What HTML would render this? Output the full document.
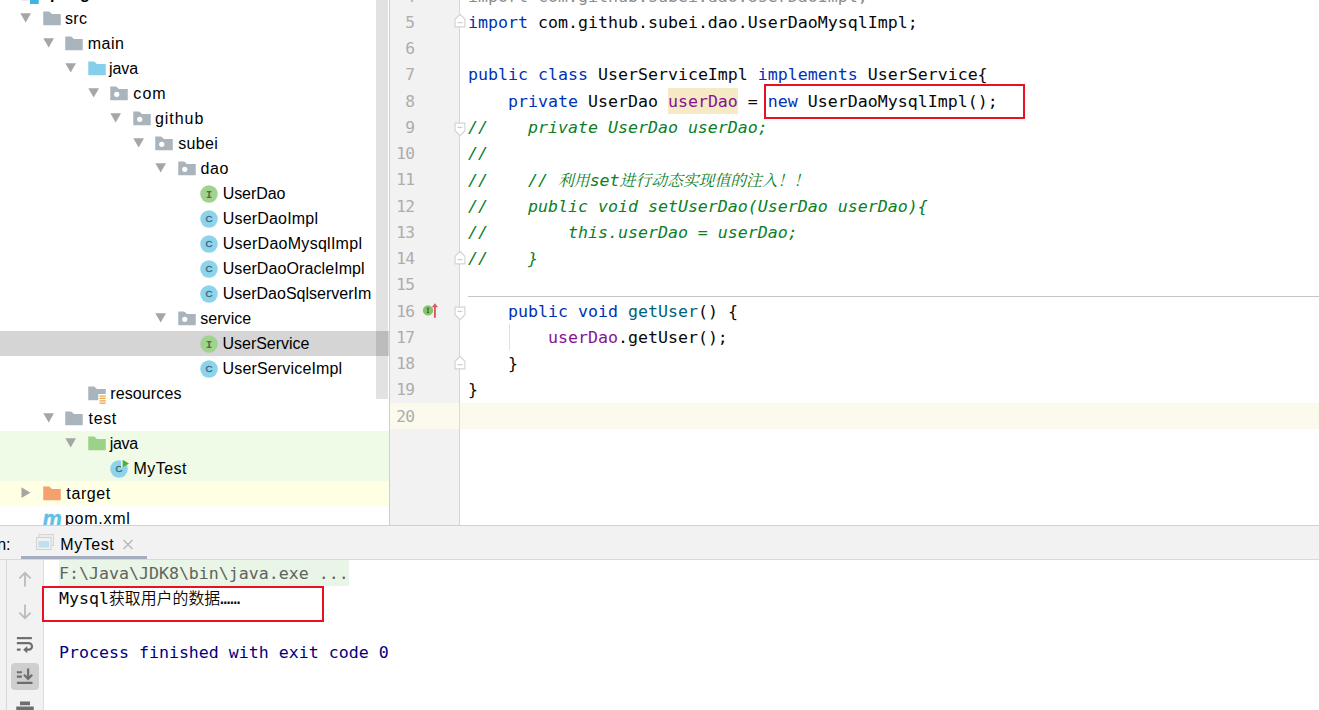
<!DOCTYPE html>
<html lang="zh-CN"><head><meta charset="utf-8"><title>IDE</title>
<style>
html,body{margin:0;padding:0}
body{width:1319px;height:710px;overflow:hidden;background:#fff;position:relative;font-family:"Liberation Sans","Noto Sans CJK SC",sans-serif;color:#000}
#tree{position:absolute;left:0;top:0;width:389px;height:525px;overflow:hidden;background:#fff}
.row{position:absolute;left:0;width:389px;height:25px;line-height:25px;font-size:16px;white-space:nowrap}
.row .t{position:absolute;top:0;letter-spacing:0}
.ic{position:absolute;width:20px;height:20px;top:2.6px}
.ci{top:3.1px}
.ar{position:absolute;width:11.4px;height:11.4px;top:6.2px}
#sb{position:absolute;left:376px;top:0;width:11px;height:398.5px;background:rgba(0,0,0,.115);border-right:1px solid rgba(255,255,255,.0)}
#vline{position:absolute;left:389px;top:0;width:1px;height:525px;background:#cfcfcf}
#gutter{position:absolute;left:390px;top:0;width:69px;height:525px;background:#f2f2f2}
#gline{position:absolute;left:459px;top:0;width:1px;height:525px;background:#d6d6d6}
#editor{position:absolute;left:460px;top:0;width:859px;height:525px;background:#fff;overflow:hidden}
.mono{font-family:"DejaVu Sans Mono","Liberation Mono","Noto Sans CJK SC",monospace;font-size:16.6px}
.ln{position:absolute;left:390px;width:24.3px;text-align:right;font-size:16.2px !important;letter-spacing:-0.7px;height:26.25px;line-height:26.25px;color:#adadad;white-space:pre}
.cl{position:absolute;left:468.1px;height:26.25px;line-height:26.25px;white-space:pre;color:#080808}
.k{color:#0033b3}.f{color:#871094}.m{color:#00627a}.c{color:#0a8028;font-style:italic}.g{color:#8c8c8c}
.cj{font-family:"Noto Serif CJK SC",serif;font-size:15.8px}
.con{position:absolute;left:59px;height:26.25px;line-height:26.25px;white-space:pre}
.cs{font-family:"Noto Sans CJK SC",sans-serif;font-size:15.9px;font-weight:350}
.redbox{position:absolute;border:2px solid #e81123;box-sizing:border-box}
#bottom{position:absolute;left:0;top:525px;width:1319px;height:185px;background:#f2f2f2}
</style></head><body>

<div id="tree">
<div class="row" style="top:-19px"><svg class="ic" viewBox="0 0 16 16" style="left:20px"><rect x="1" y="2" width="14" height="11" fill="#aab4bc"/><rect x="8" y="9" width="7" height="7" fill="#3fb3e3"/><rect x="7" y="8" width="1" height="8" fill="#fff"/><rect x="7" y="8" width="9" height="1" fill="#fff"/></svg><span class="t" style="left:41px;font-weight:bold">spring-01-ioc</span></div>
<div class="row" style="top:6px;"><svg class="ar" viewBox="0 0 12 12" style="left:20.0px"><path d="M0.3 1.2h11.4L6 11z" fill="#a6a6a6"/></svg><svg style="left:41.75px" class="ic" viewBox="0 0 16 16"><path fill="#aab4bc" d="M1 13h14V4H7.98L6.7 2.71C6.22 2.24 5.77 2 5.34 2H1z"/></svg><span class="t" style="left:64.90px;letter-spacing:0.400px">src</span></div>
<div class="row" style="top:31px;"><svg class="ar" viewBox="0 0 12 12" style="left:42.5px"><path d="M0.3 1.2h11.4L6 11z" fill="#a6a6a6"/></svg><svg style="left:64.25px" class="ic" viewBox="0 0 16 16"><path fill="#aab4bc" d="M1 13h14V4H7.98L6.7 2.71C6.22 2.24 5.77 2 5.34 2H1z"/></svg><span class="t" style="left:87.80px;letter-spacing:0.454px">main</span></div>
<div class="row" style="top:56px;"><svg class="ar" viewBox="0 0 12 12" style="left:65.0px"><path d="M0.3 1.2h11.4L6 11z" fill="#a6a6a6"/></svg><svg style="left:86.75px" class="ic" viewBox="0 0 16 16"><path fill="#85cfea" d="M1 13h14V4H7.98L6.7 2.71C6.22 2.24 5.77 2 5.34 2H1z"/></svg><span class="t" style="left:109.10px;letter-spacing:-0.107px">java</span></div>
<div class="row" style="top:81px;"><svg class="ar" viewBox="0 0 12 12" style="left:87.5px"><path d="M0.3 1.2h11.4L6 11z" fill="#a6a6a6"/></svg><svg style="left:109.25px" class="ic" viewBox="0 0 16 16"><path fill="#aab4bc" fill-rule="evenodd" d="M1 13h14V4H7.98L6.7 2.71C6.22 2.24 5.77 2 5.34 2H1zM6.2 10.3a2.1 2.1 0 1 0 0-4.2 2.1 2.1 0 0 0 0 4.2z"/></svg><span class="t" style="left:133.36px;letter-spacing:1.040px">com</span></div>
<div class="row" style="top:106px;"><svg class="ar" viewBox="0 0 12 12" style="left:110.0px"><path d="M0.3 1.2h11.4L6 11z" fill="#a6a6a6"/></svg><svg style="left:131.75px" class="ic" viewBox="0 0 16 16"><path fill="#aab4bc" fill-rule="evenodd" d="M1 13h14V4H7.98L6.7 2.71C6.22 2.24 5.77 2 5.34 2H1zM6.2 10.3a2.1 2.1 0 1 0 0-4.2 2.1 2.1 0 0 0 0 4.2z"/></svg><span class="t" style="left:155.06px;letter-spacing:0.928px">github</span></div>
<div class="row" style="top:131px;"><svg class="ar" viewBox="0 0 12 12" style="left:132.5px"><path d="M0.3 1.2h11.4L6 11z" fill="#a6a6a6"/></svg><svg style="left:154.25px" class="ic" viewBox="0 0 16 16"><path fill="#aab4bc" fill-rule="evenodd" d="M1 13h14V4H7.98L6.7 2.71C6.22 2.24 5.77 2 5.34 2H1zM6.2 10.3a2.1 2.1 0 1 0 0-4.2 2.1 2.1 0 0 0 0 4.2z"/></svg><span class="t" style="left:178.20px;letter-spacing:0.360px">subei</span></div>
<div class="row" style="top:156px;"><svg class="ar" viewBox="0 0 12 12" style="left:155.0px"><path d="M0.3 1.2h11.4L6 11z" fill="#a6a6a6"/></svg><svg style="left:176.75px" class="ic" viewBox="0 0 16 16"><path fill="#aab4bc" fill-rule="evenodd" d="M1 13h14V4H7.98L6.7 2.71C6.22 2.24 5.77 2 5.34 2H1zM6.2 10.3a2.1 2.1 0 1 0 0-4.2 2.1 2.1 0 0 0 0 4.2z"/></svg><span class="t" style="left:200.54px;letter-spacing:0.560px">dao</span></div>
<div class="row" style="top:181px;"><svg style="left:199.25px" class="ic ci" viewBox="0 0 16 16"><circle cx="8" cy="8" r="7" fill="#a0d38e"/><text x="8" y="10.900" text-anchor="middle" font-family="'Liberation Mono',monospace" font-weight="bold" font-size="8.2" fill="#4f6a45">I</text></svg><span class="t" style="left:222.72px;letter-spacing:-0.080px">UserDao</span></div>
<div class="row" style="top:206px;"><svg style="left:199.25px" class="ic ci" viewBox="0 0 16 16"><circle cx="8" cy="8" r="7" fill="#8cd3ec"/><text x="8" y="10.700" text-anchor="middle" font-family="'Liberation Sans',sans-serif" font-size="7.8" stroke="#4a6270" stroke-width="0.25" fill="#4a6270">C</text></svg><span class="t" style="left:222.72px;letter-spacing:0.192px">UserDaoImpl</span></div>
<div class="row" style="top:231px;"><svg style="left:199.25px" class="ic ci" viewBox="0 0 16 16"><circle cx="8" cy="8" r="7" fill="#8cd3ec"/><text x="8" y="10.700" text-anchor="middle" font-family="'Liberation Sans',sans-serif" font-size="7.8" stroke="#4a6270" stroke-width="0.25" fill="#4a6270">C</text></svg><span class="t" style="left:222.72px;letter-spacing:0.272px">UserDaoMysqlImpl</span></div>
<div class="row" style="top:256px;"><svg style="left:199.25px" class="ic ci" viewBox="0 0 16 16"><circle cx="8" cy="8" r="7" fill="#8cd3ec"/><text x="8" y="10.700" text-anchor="middle" font-family="'Liberation Sans',sans-serif" font-size="7.8" stroke="#4a6270" stroke-width="0.25" fill="#4a6270">C</text></svg><span class="t" style="left:222.72px;letter-spacing:0.090px">UserDaoOracleImpl</span></div>
<div class="row" style="top:281px;"><svg style="left:199.25px" class="ic ci" viewBox="0 0 16 16"><circle cx="8" cy="8" r="7" fill="#8cd3ec"/><text x="8" y="10.700" text-anchor="middle" font-family="'Liberation Sans',sans-serif" font-size="7.8" stroke="#4a6270" stroke-width="0.25" fill="#4a6270">C</text></svg><span class="t" style="left:222.72px;letter-spacing:0.009px">UserDaoSqlserverIm</span></div>
<div class="row" style="top:306px;"><svg class="ar" viewBox="0 0 12 12" style="left:155.0px"><path d="M0.3 1.2h11.4L6 11z" fill="#a6a6a6"/></svg><svg style="left:176.75px" class="ic" viewBox="0 0 16 16"><path fill="#aab4bc" fill-rule="evenodd" d="M1 13h14V4H7.98L6.7 2.71C6.22 2.24 5.77 2 5.34 2H1zM6.2 10.3a2.1 2.1 0 1 0 0-4.2 2.1 2.1 0 0 0 0 4.2z"/></svg><span class="t" style="left:200.22px;letter-spacing:0.053px">service</span></div>
<div class="row" style="top:331px;background:#d5d5d5;"><svg style="left:199.25px" class="ic ci" viewBox="0 0 16 16"><circle cx="8" cy="8" r="7" fill="#a0d38e"/><text x="8" y="10.900" text-anchor="middle" font-family="'Liberation Mono',monospace" font-weight="bold" font-size="8.2" fill="#4f6a45">I</text></svg><span class="t" style="left:222.56px;letter-spacing:-0.032px">UserService</span></div>
<div class="row" style="top:356px;"><svg style="left:199.25px" class="ic ci" viewBox="0 0 16 16"><circle cx="8" cy="8" r="7" fill="#8cd3ec"/><text x="8" y="10.700" text-anchor="middle" font-family="'Liberation Sans',sans-serif" font-size="7.8" stroke="#4a6270" stroke-width="0.25" fill="#4a6270">C</text></svg><span class="t" style="left:222.56px;letter-spacing:0.160px">UserServiceImpl</span></div>
<div class="row" style="top:381px;"><svg style="left:86.75px" class="ic" viewBox="0 0 16 16"><path fill="#aab4bc" d="M1 13h14V4H7.98L6.7 2.71C6.22 2.24 5.77 2 5.34 2H1z"/><rect x="9" y="8" width="7" height="8" fill="#fff"/><path d="M10 9.6h5M10 11.5h5M10 13.4h5M10 15.3h5" stroke="#e6a64a" stroke-width="1"/></svg><span class="t" style="left:110.22px;letter-spacing:0.120px">resources</span></div>
<div class="row" style="top:406px;"><svg class="ar" viewBox="0 0 12 12" style="left:42.5px"><path d="M0.3 1.2h11.4L6 11z" fill="#a6a6a6"/></svg><svg style="left:64.25px" class="ic" viewBox="0 0 16 16"><path fill="#aab4bc" d="M1 13h14V4H7.98L6.7 2.71C6.22 2.24 5.77 2 5.34 2H1z"/></svg><span class="t" style="left:88.60px;letter-spacing:0.614px">test</span></div>
<div class="row" style="top:431px;background:#effae7;"><svg class="ar" viewBox="0 0 12 12" style="left:65.0px"><path d="M0.3 1.2h11.4L6 11z" fill="#a6a6a6"/></svg><svg style="left:86.75px" class="ic" viewBox="0 0 16 16"><path fill="#9bd287" d="M1 13h14V4H7.98L6.7 2.71C6.22 2.24 5.77 2 5.34 2H1z"/></svg><span class="t" style="left:109.74px;letter-spacing:-0.320px">java</span></div>
<div class="row" style="top:456px;background:#effae7;"><svg style="left:109.25px" class="ic ci" viewBox="0 0 16 16"><circle cx="8" cy="8" r="7" fill="#8cd3ec"/><text x="8" y="10.700" text-anchor="middle" font-family="'Liberation Sans',sans-serif" font-size="7.8" stroke="#4a6270" stroke-width="0.25" fill="#4a6270">C</text><path d="M9.700 0l6.300 3.600-6.300 3.800z" fill="#effae7"/><path d="M10.900 0.500l5.200 3.100-5.200 3.200z" fill="#4fae3c"/></svg><span class="t" style="left:133.40px;letter-spacing:0.500px">MyTest</span></div>
<div class="row" style="top:481px;background:#ffffe4;"><svg class="ar" viewBox="0 0 12 12" style="left:20.0px"><path d="M1.5 0.3v11.4L11 6z" fill="#a6a6a6"/></svg><svg style="left:41.75px" class="ic" viewBox="0 0 16 16"><path fill="#f5a06e" d="M1 13h14V4H7.98L6.7 2.71C6.22 2.24 5.77 2 5.34 2H1z"/></svg><span class="t" style="left:66.34px;letter-spacing:0.608px">target</span></div>
<div class="row" style="top:506px;"><svg style="left:41.75px" class="ic" viewBox="0 0 16 16"><text x="0.3" y="15.2" font-family="'Liberation Sans',sans-serif" font-style="italic" font-weight="bold" font-size="20" fill="#62c0e6" textLength="15.4" stroke="#62c0e6" stroke-width="0.35" lengthAdjust="spacingAndGlyphs">m</text></svg><span class="t" style="left:64.90px;letter-spacing:0.747px">pom.xml</span></div>
<div id="sb"></div>
</div>
<div id="vline"></div><div id="gutter"></div><div id="gline"></div><div id="editor"></div>
<div style="position:absolute;left:390px;top:402.50px;width:929px;height:26.25px;background:#fcfaed"></div>
<div style="position:absolute;left:459px;top:402.50px;width:1px;height:26.25px;background:#dedcd0"></div>
<div style="position:absolute;left:668px;top:88.2px;width:70px;height:25.8px;background:#f5eac4"></div>
<div class="ln mono" style="top:-16.30px">4</div>
<div class="cl mono" style="top:-16.30px"><span class="g">import com.github.subei.dao.UserDaoImpl;</span></div>
<div class="ln mono" style="top:9.95px">5</div>
<div class="cl mono" style="top:9.95px"><span class="k">import</span> com.github.subei.dao.UserDaoMysqlImpl;</div>
<div class="ln mono" style="top:36.20px">6</div>
<div class="ln mono" style="top:62.45px">7</div>
<div class="cl mono" style="top:62.45px"><span class="k">public class</span> UserServiceImpl <span class="k">implements</span> UserService{</div>
<div class="ln mono" style="top:88.70px">8</div>
<div class="cl mono" style="top:88.70px">    <span class="k">private</span> UserDao <span class="f">userDao</span> = <span class="k">new</span> UserDaoMysqlImpl();</div>
<div class="ln mono" style="top:114.95px">9</div>
<div class="cl mono" style="top:114.95px"><span class="c">//    private UserDao userDao;</span></div>
<div class="ln mono" style="top:141.20px">10</div>
<div class="cl mono" style="top:141.20px"><span class="c">//</span></div>
<div class="ln mono" style="top:167.45px">11</div>
<div class="cl mono" style="top:167.45px"><span class="c">//    // <span class="cj">利用</span>set<span class="cj">进行动态实现值的注入！！</span></span></div>
<div class="ln mono" style="top:193.70px">12</div>
<div class="cl mono" style="top:193.70px"><span class="c">//    public void setUserDao(UserDao userDao){</span></div>
<div class="ln mono" style="top:219.95px">13</div>
<div class="cl mono" style="top:219.95px"><span class="c">//        this.userDao = userDao;</span></div>
<div class="ln mono" style="top:246.20px">14</div>
<div class="cl mono" style="top:246.20px"><span class="c">//    }</span></div>
<div class="ln mono" style="top:272.45px">15</div>
<div class="ln mono" style="top:298.70px">16</div>
<div class="cl mono" style="top:298.70px">    <span class="k">public void</span> <span class="m">getUser</span>() {</div>
<div class="ln mono" style="top:324.95px">17</div>
<div class="cl mono" style="top:324.95px">        <span class="f">userDao</span>.getUser();</div>
<div class="ln mono" style="top:351.20px">18</div>
<div class="cl mono" style="top:351.20px">    }</div>
<div class="ln mono" style="top:377.45px">19</div>
<div class="cl mono" style="top:377.45px">}</div>
<div class="ln mono" style="top:403.70px">20</div>
<div style="position:absolute;left:468px;top:295.6px;width:851px;height:1.2px;background:#c6c6c6"></div>
<div style="position:absolute;left:509px;top:323.75px;width:1px;height:26.25px;background:#e0e0e0"></div>
<svg style="position:absolute;left:453.500px;top:13.35px;width:12px;height:15px" viewBox="0 0 12 15"><path d="M1.100 13.900h9.800V6.300L6 1.300 1.100 6.300z" fill="#fff" stroke="#d3d3d3" stroke-width="1.150"/><path d="M3.500 9.700h5" stroke="#c4c4c4" stroke-width="1"/></svg>
<svg style="position:absolute;left:453.500px;top:122.05px;width:12px;height:15px" viewBox="0 0 12 15"><path d="M1.100 1.100h9.800v7.600L6 13.700 1.100 8.700z" fill="#fff" stroke="#d3d3d3" stroke-width="1.150"/><path d="M3.500 5.300h5" stroke="#c4c4c4" stroke-width="1"/></svg>
<svg style="position:absolute;left:453.500px;top:249.60px;width:12px;height:15px" viewBox="0 0 12 15"><path d="M1.100 13.900h9.800V6.300L6 1.300 1.100 6.300z" fill="#fff" stroke="#d3d3d3" stroke-width="1.150"/><path d="M3.500 9.700h5" stroke="#c4c4c4" stroke-width="1"/></svg>
<svg style="position:absolute;left:453.500px;top:305.80px;width:12px;height:15px" viewBox="0 0 12 15"><path d="M1.100 1.100h9.800v7.600L6 13.700 1.100 8.700z" fill="#fff" stroke="#d3d3d3" stroke-width="1.150"/><path d="M3.500 5.300h5" stroke="#c4c4c4" stroke-width="1"/></svg>
<svg style="position:absolute;left:453.500px;top:354.60px;width:12px;height:15px" viewBox="0 0 12 15"><path d="M1.100 13.900h9.800V6.300L6 1.300 1.100 6.300z" fill="#fff" stroke="#d3d3d3" stroke-width="1.150"/><path d="M3.500 9.700h5" stroke="#c4c4c4" stroke-width="1"/></svg>
<svg style="position:absolute;left:421px;top:301px;width:20px;height:20px" viewBox="0 0 20 20"><circle cx="7" cy="9.400" r="5.150" fill="#80c66c"/><path d="M5.900 7.300h2.200M5.900 11.500h2.200M7 7.300v4.200" stroke="#3f5a36" stroke-width="1.100" fill="none"/><path d="M13.900 16.800V5" stroke="#e05565" stroke-width="1.900"/><path d="M10.800 6.200L13.900 2.300 17 6.200z" fill="#e05565"/></svg>
<div class="redbox" style="left:764px;top:84px;width:261px;height:34.5px"></div>
<div id="bottom">
<div style="position:absolute;left:0;top:-0.5px;width:1319px;height:1px;background:#d1d1d1"></div>
<span style="position:absolute;left:-2.8px;top:6.5px;height:25px;line-height:25px;font-size:16px">n:</span>
<svg style="position:absolute;left:35px;top:8px;width:20px;height:18px" viewBox="0 0 20 18"><rect x="4" y="1.5" width="14.5" height="11" fill="#ececec" stroke="#d6d6d6" stroke-width="1"/><rect x="1.5" y="4.5" width="14.5" height="12" fill="#f0f0f0" stroke="#d2d2d2" stroke-width="1"/><rect x="3.5" y="8" width="10.5" height="6.5" fill="#bfe0ee"/></svg>
<span style="position:absolute;left:60.3px;top:6.5px;height:25px;line-height:25px;font-size:16px;letter-spacing:0.55px">MyTest</span>
<svg style="position:absolute;left:122px;top:14px;width:12px;height:11px" viewBox="0 0 12 11"><path d="M1.5 1l9 9M10.5 1l-9 9" stroke="#b4b4b4" stroke-width="1.2" fill="none"/></svg>
<div style="position:absolute;left:20.5px;top:31px;width:126.5px;height:3.75px;background:#a5adc0"></div>
<div style="position:absolute;left:0;top:34px;width:1319px;height:151px;background:#fff;border-top:1px solid #d9d9d9;box-sizing:border-box"></div>
<div style="position:absolute;left:0;top:35px;width:43px;height:150px;background:#f2f2f2;border-right:1px solid #dcdcdc;box-sizing:content-box"></div>
<div style="position:absolute;left:6px;top:35px;width:1px;height:150px;background:#d8d8d8"></div>
<svg style="position:absolute;left:15px;top:44px;width:20px;height:20px" viewBox="0 0 16 16"><path d="M8 14V3M3.5 7.5L8 3l4.500 4.500" stroke="#bdbdbd" stroke-width="1.5" fill="none"/></svg>
<svg style="position:absolute;left:15px;top:77px;width:20px;height:20px" viewBox="0 0 16 16"><path d="M8 2v11M3.5 8.5L8 13l4.500-4.500" stroke="#bdbdbd" stroke-width="1.5" fill="none"/></svg>
<svg style="position:absolute;left:15px;top:110px;width:20px;height:20px" viewBox="0 0 16 16"><path d="M1.5 2.500h12" stroke="#6e6e6e" stroke-width="1.75" fill="none"/><path d="M1.500 6.500h9.500a2.600 2.600 0 0 1 0 5.200H8.500" stroke="#6e6e6e" stroke-width="1.75" fill="none"/><path d="M9.800 8.800L6.500 11.700l3.300 2.900z" fill="#6e6e6e"/><path d="M1.500 11.700h3" stroke="#6e6e6e" stroke-width="1.75"/></svg>
<div style="position:absolute;left:11px;top:137.500px;width:27.500px;height:27.500px;border-radius:4px;background:#cfcfcf"></div>
<svg style="position:absolute;left:15px;top:141px;width:20px;height:20px" viewBox="0 0 16 16"><path d="M1.500 5h4M1.500 8.500h4M1.500 13.500h12.500" stroke="#6e6e6e" stroke-width="1.75" fill="none"/><path d="M10.500 2v8M7.200 7l3.300 3.300L13.800 7" stroke="#6e6e6e" stroke-width="1.75" fill="none"/></svg>
<svg style="position:absolute;left:15px;top:174px;width:20px;height:20px" viewBox="0 0 16 16"><rect x="4" y="2" width="8" height="3" fill="#6e6e6e"/><path d="M1 6h14v7H1z" fill="#6e6e6e"/></svg>
<div style="position:absolute;left:59px;top:35px;width:290px;height:25.8px;background:#e9f5e6"></div>
<div class="con mono" style="top:36.2px;color:#5e645e">F:\Java\JDK8\bin\java.exe ...</div>
<div class="con mono" style="top:60.2px;color:#080808">Mysql<span class="cs">获取用户的数据</span>……</div>
<div class="con mono" style="top:114.900px;color:#00007f">Process finished with exit code 0</div>
<div class="redbox" style="left:42px;top:61px;width:282px;height:36px"></div>
</div>
</body></html>
